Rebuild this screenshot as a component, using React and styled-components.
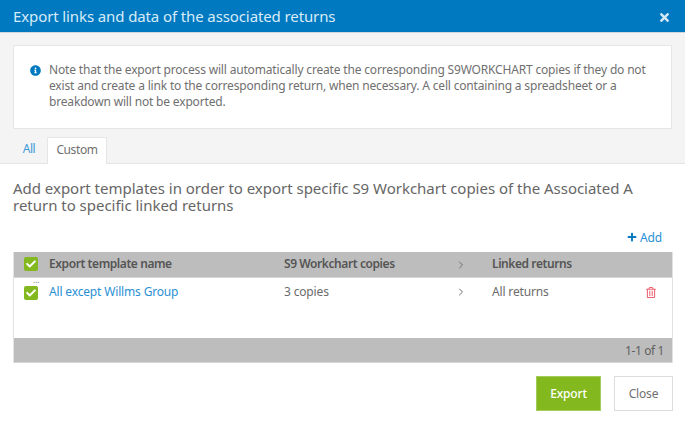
import React from "react";
import styled, { createGlobalStyle } from "styled-components";
import { FaInfoCircle, FaPlus, FaTimes, FaRegTrashAlt, FaCheck } from "react-icons/fa";
import { FiChevronRight } from "react-icons/fi";

const Global = createGlobalStyle`
  html, body { margin: 0; padding: 0; background: #fff; }
  body { font-family: "Noto Sans", "Open Sans", sans-serif; color: #666; }
  * { box-sizing: border-box; }
`;

const Dialog = styled.div`
  width: 685px;
  height: 423px;
  display: flex;
  flex-direction: column;
  overflow: hidden;
`;
const Header = styled.div`
  height: 33px;
  flex: none;
  background: #0079c1;
  border-bottom: 1px solid #d0d7dc;
  color: #d8ecf7;
  display: flex;
  align-items: center;
  justify-content: space-between;
  padding: 0 14px 1px 13px;
  font-size: 15px;
  letter-spacing: -0.11px;
`;
const CloseIcon = styled(FaTimes)`
  width: 13px;
  height: 13px;
  margin-top: 3px;
  color: #d5e9f5;
`;
const Top = styled.div`
  background: #f4f4f4;
  padding: 12px 13px 0;
  height: 131px;
  flex: none;
  border-bottom: 1px solid #e4e4e4;
`;
const Notice = styled.div`
  height: 84px;
  background: #fff;
  border: 1px solid #e6e6e6;
  padding: 16px 16px 0;
  display: flex;
  gap: 8px;
  font-size: 12px;
  line-height: 16.2px;
  color: #707070;
  letter-spacing: -0.17px;
`;
const InfoIcon = styled(FaInfoCircle)`
  flex: none;
  width: 11px;
  height: 11px;
  margin-top: 3px;
  color: #0079c1;
`;
const Tabs = styled.div`
  display: flex;
  gap: 2px;
  margin-top: 8px;
  height: 27px;
`;
const Tab = styled.div`
  height: ${(p) => (p.$active ? "27px" : "26px")};
  width: ${(p) => p.$w};
  padding-bottom: 3px;
  display: flex;
  align-items: center;
  justify-content: center;
  font-size: 12px;
  letter-spacing: -0.4px;
  color: ${(p) => (p.$active ? "#707070" : "#3d9bd8")};
  background: ${(p) => (p.$active ? "#fff" : "transparent")};
  border: ${(p) => (p.$active ? "1px solid #e6e6e6" : "none")};
  border-bottom: none;
`;
const Content = styled.div`
  flex: 1;
  display: flex;
  flex-direction: column;
  padding: 16px 12px 0 13px;
`;
const Heading = styled.div`
  font-size: 15px;
  line-height: 17px;
  color: #666;
  letter-spacing: -0.02px;
`;
const AddRow = styled.div`
  display: flex;
  justify-content: flex-end;
  margin-top: 15px;
  height: 16px;
  padding-right: 11px;
`;
const AddLink = styled.div`
  display: flex;
  align-items: center;
  gap: 3px;
  font-size: 12px;
  letter-spacing: -0.16px;
  color: #2a90d4;
`;
const PlusIcon = styled(FaPlus)`
  width: 10px;
  height: 10px;
  color: #0079c1;
`;
const Table = styled.div`
  margin-top: 7px;
  height: 111px;
  border-right: 1px solid #e2e2e2;
  border-left: 1px solid #e2e2e2;
  display: flex;
  flex-direction: column;
`;
const Columns = `
  display: grid;
  grid-template-columns: 35px 235px 170px 38px 1fr;
  align-items: center;
  font-size: 12px;
  letter-spacing: -0.16px;
`;
const HeadRow = styled.div`
  ${Columns}
  height: 26px;
  flex: none;
  padding-bottom: 1px;
  background: #bdbdbd;
  border-bottom: 1px solid #d6d6d6;
  color: #555;
  font-weight: 600;
  letter-spacing: -0.42px;
`;
const BodyRow = styled.div`
  ${Columns}
  flex: 1;
  align-items: start;
  padding-top: 6px;
  color: #6b6b6b;
`;
const Cell = styled.div`
  line-height: 16px;
  white-space: nowrap;
`;
const CheckCell = styled.div`
  position: relative;
  padding-left: 10px;
  margin-top: ${(p) => p.$top || "0"};
`;
const Check = styled.div`
  width: 14px;
  height: 14px;
  border-radius: 2px;
  background: #84b81f;
  display: flex;
  align-items: center;
  justify-content: center;
  color: #fff;
`;
const CheckMark = styled(FaCheck)`
  width: 10px;
  height: 10px;
`;
const Dots = styled.span`
  position: absolute;
  left: 19px;
  top: -8px;
  font-size: 8px;
  line-height: 4px;
  letter-spacing: 0;
  color: #777;
`;
const NameLink = styled.span`
  color: #2a90d4;
`;
const Chevron = styled(FiChevronRight)`
  width: 12px;
  height: 12px;
  color: #6f6f6f;
  display: block;
  margin: 2px 0 0 1px;
`;
const RowEnd = styled.div`
  display: flex;
  justify-content: space-between;
  padding-right: 16px;
`;
const TrashIcon = styled(FaRegTrashAlt)`
  width: 10px;
  height: 11px;
  margin-top: 3px;
  color: #f0616f;
`;
const TableFoot = styled.div`
  height: 25px;
  flex: none;
  background: #bdbdbd;
  border-bottom: 1px solid #d6d6d6;
  display: flex;
  align-items: center;
  justify-content: flex-end;
  padding-right: 8px;
  font-size: 12px;
  letter-spacing: -0.4px;
  color: #5f5f5f;
`;
const Actions = styled.div`
  display: flex;
  justify-content: flex-end;
  gap: 13px;
  margin-top: 13px;
`;
const Button = styled.button`
  height: 35px;
  width: ${(p) => p.$w};
  font: inherit;
  font-size: 12px;
  letter-spacing: -0.16px;
  padding: 0;
  background: ${(p) => (p.$primary ? "#84b81f" : "#fff")};
  color: ${(p) => (p.$primary ? "#fff" : "#707070")};
  font-weight: ${(p) => (p.$primary ? 500 : 400)};
  border: 1px solid ${(p) => (p.$primary ? "#a3cc5a" : "#dcdcdc")};
`;

export default function App() {
  return (
    <Dialog>
      <Global />
      <Header>
        <span>Export links and data of the associated returns</span>
        <CloseIcon />
      </Header>
      <Top>
        <Notice>
          <InfoIcon />
          <div>
            Note that the export process will automatically create the corresponding S9WORKCHART copies if they do not
            exist and create a link to the corresponding return, when necessary. A cell containing a spreadsheet or a
            breakdown will not be exported.
          </div>
        </Notice>
        <Tabs>
          <Tab $w="32px">All</Tab>
          <Tab $active $w="60px">Custom</Tab>
        </Tabs>
      </Top>
      <Content>
        <Heading>
          Add export templates in order to export specific S9 Workchart copies of the Associated A
          <br />
          return to specific linked returns
        </Heading>
        <AddRow>
          <AddLink>
            <PlusIcon />
            Add
          </AddLink>
        </AddRow>
        <Table>
          <HeadRow>
            <CheckCell>
              <Check>
                <CheckMark />
              </Check>
            </CheckCell>
            <Cell>Export template name</Cell>
            <Cell>S9 Workchart copies</Cell>
            <Cell>
              <Chevron />
            </Cell>
            <Cell>Linked returns</Cell>
          </HeadRow>
          <BodyRow>
            <CheckCell $top="2px">
              <Dots>...</Dots>
              <Check>
                <CheckMark />
              </Check>
            </CheckCell>
            <Cell>
              <NameLink>All except Willms Group</NameLink>
            </Cell>
            <Cell>3 copies</Cell>
            <Cell>
              <Chevron />
            </Cell>
            <RowEnd>
              <Cell>All returns</Cell>
              <TrashIcon />
            </RowEnd>
          </BodyRow>
          <TableFoot>1-1 of 1</TableFoot>
        </Table>
        <Actions>
          <Button $primary $w="65px">Export</Button>
          <Button $w="59px">Close</Button>
        </Actions>
      </Content>
    </Dialog>
  );
}
